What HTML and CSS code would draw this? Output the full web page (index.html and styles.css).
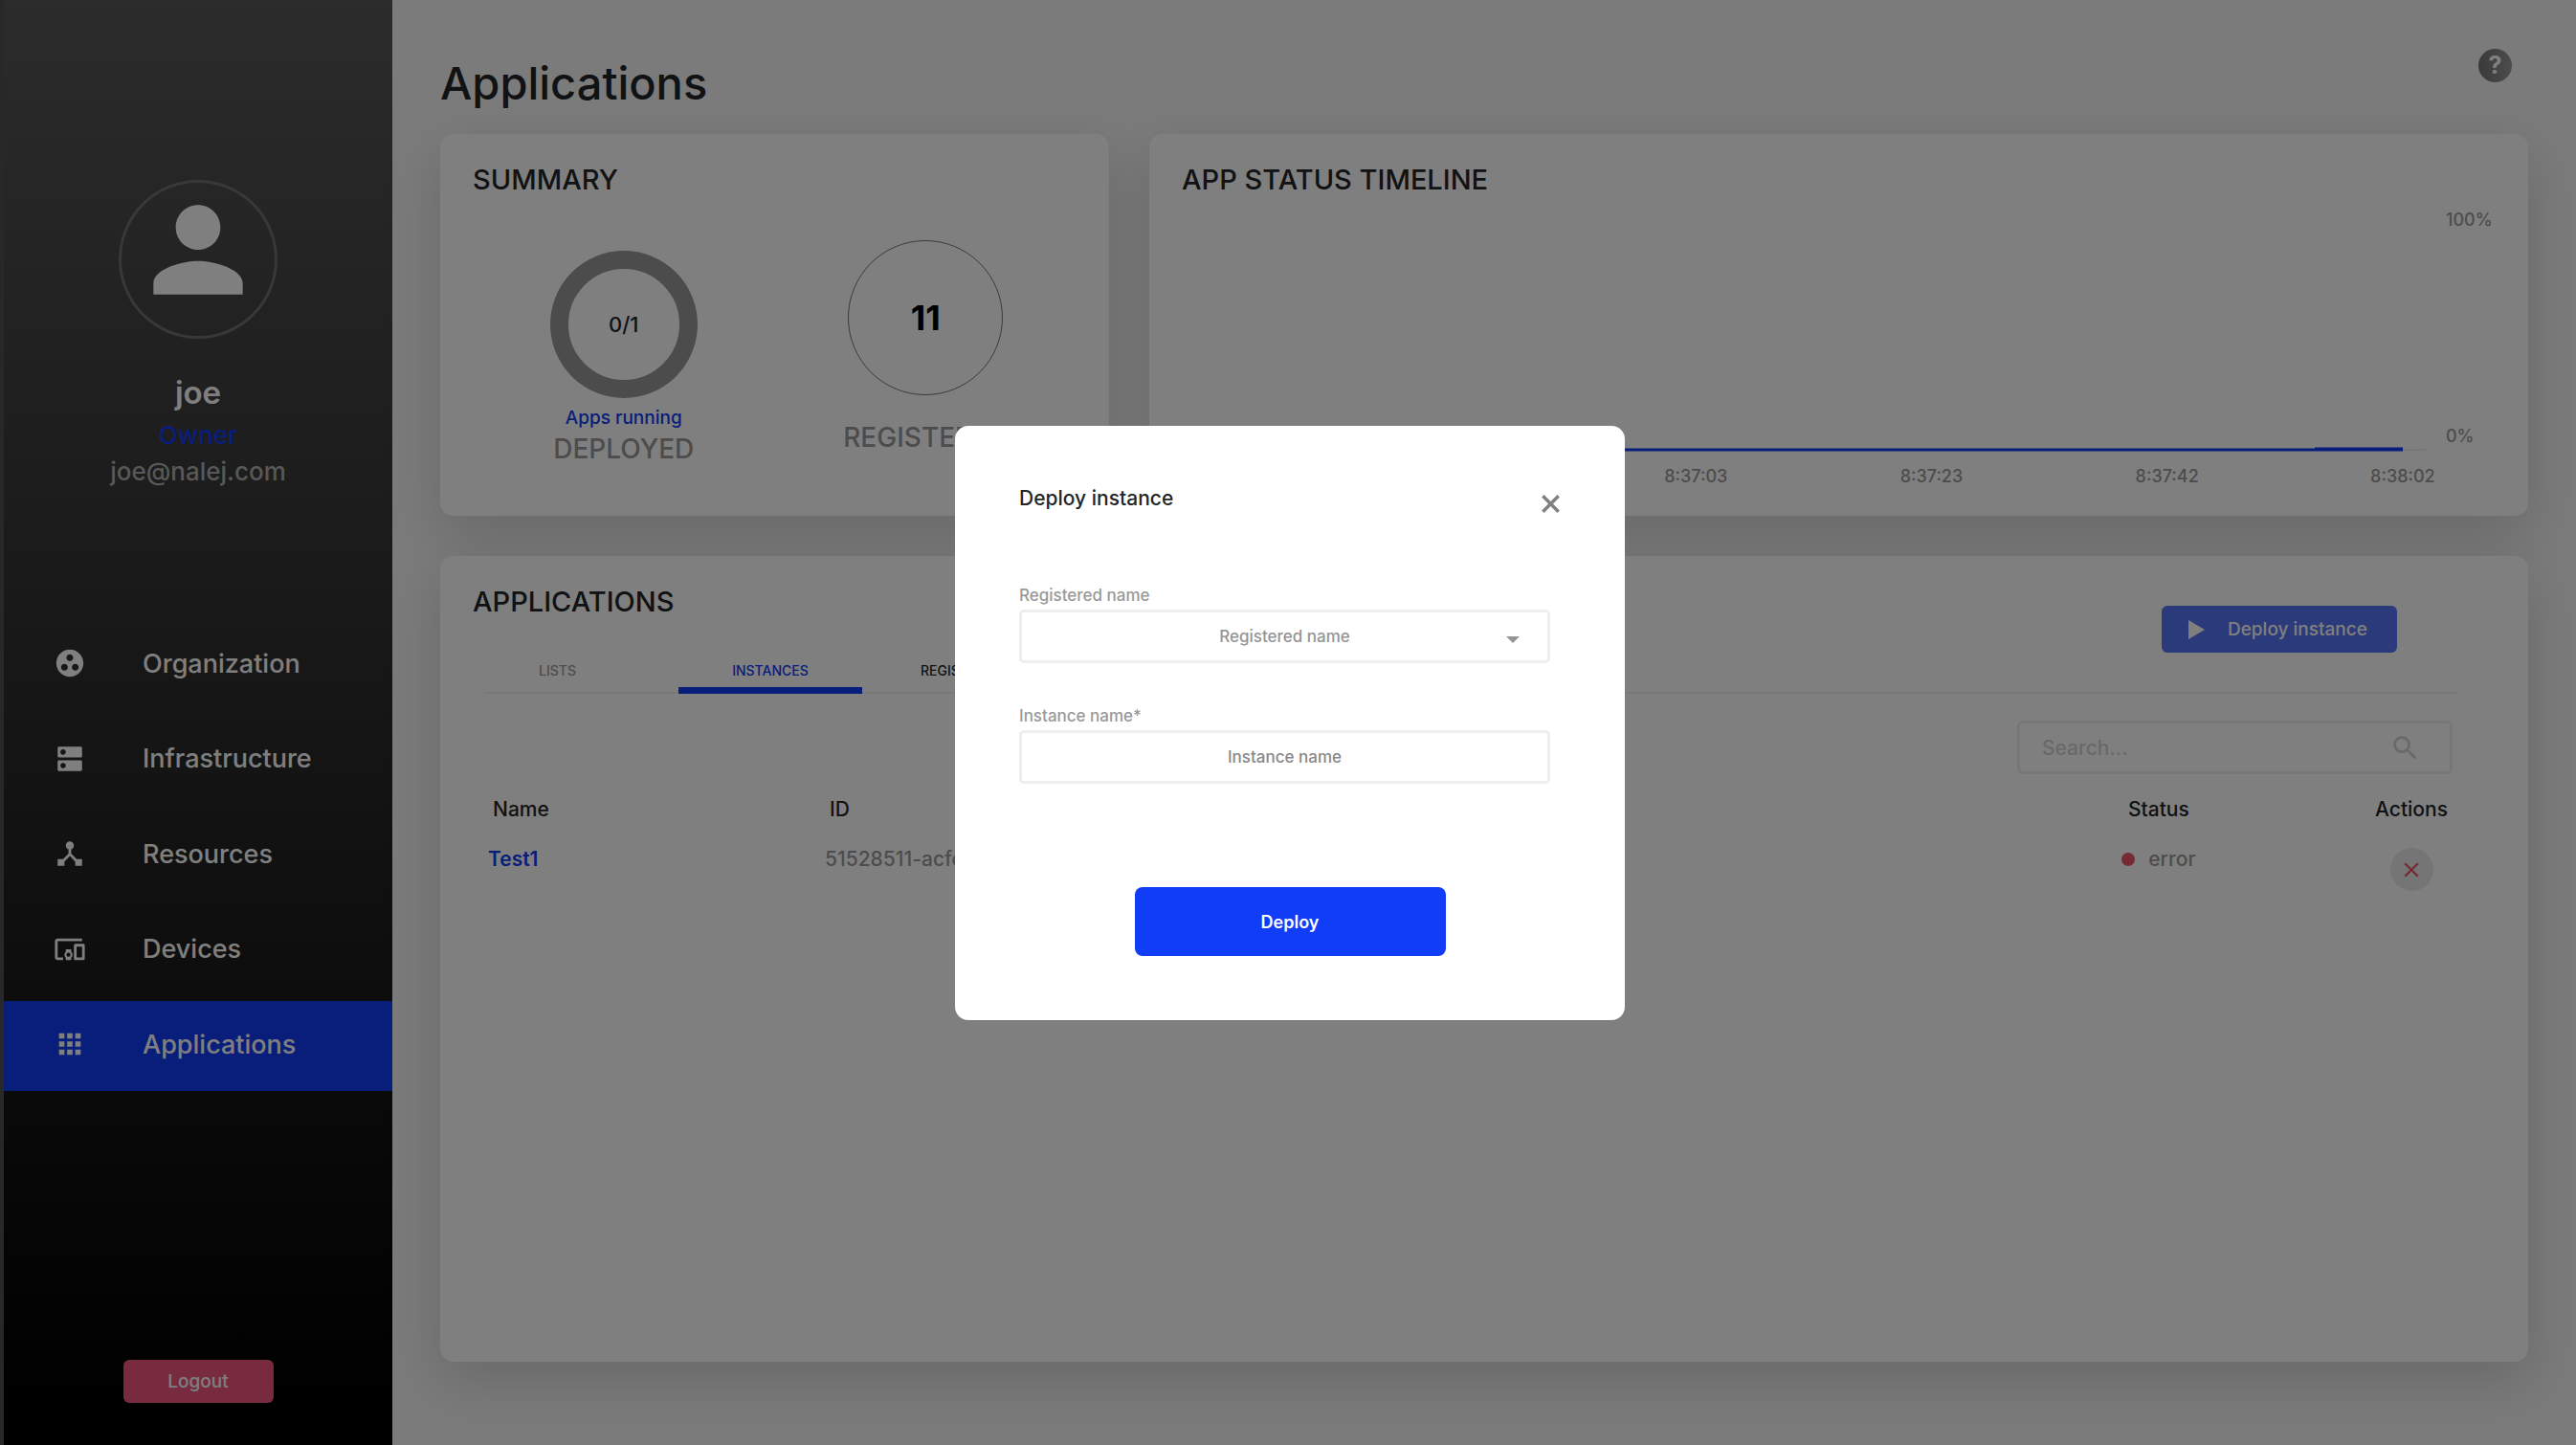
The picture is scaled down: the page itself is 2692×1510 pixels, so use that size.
FILE: index.html
```html
<!DOCTYPE html>
<html lang="en">
<head>
<meta charset="utf-8">
<meta name="viewport" content="width=device-width, initial-scale=1">
<title>Applications</title>
<link rel="stylesheet" href="styles.css">
</head>
<body>
<div class="app">
  <aside class="sidebar">
    <div class="avatar">
      <svg viewBox="0 0 24 24" aria-hidden="true"><path d="M12 12c2.21 0 4-1.79 4-4s-1.79-4-4-4-4 1.79-4 4 1.79 4 4 4zm0 2c-2.67 0-8 1.34-8 4v2h16v-2c0-2.66-5.33-4-8-4z"/></svg>
    </div>
    <p class="user-name">joe</p>
    <p class="user-role">Owner</p>
    <p class="user-email">joe@nalej.com</p>
    <nav class="nav">
      <a class="nav-link" href="#organization">
        <svg viewBox="0 0 24 24" aria-hidden="true"><path d="M12 2C6.48 2 2 6.48 2 12s4.48 10 10 10 10-4.48 10-10S17.52 2 12 2zM8 17.5c-1.38 0-2.500-1.120-2.500-2.500s1.120-2.500 2.500-2.500 2.500 1.120 2.500 2.500-1.120 2.500-2.500 2.500zM9.500 8c0-1.380 1.120-2.500 2.500-2.500s2.500 1.120 2.500 2.500-1.120 2.500-2.500 2.500S9.500 9.380 9.500 8zm6.500 9.500c-1.380 0-2.500-1.120-2.500-2.500s1.120-2.500 2.500-2.500 2.500 1.120 2.500 2.500-1.120 2.500-2.500 2.500z"/></svg>
        Organization
      </a>
      <a class="nav-link" href="#infrastructure">
        <svg viewBox="0 0 24 24" aria-hidden="true"><path d="M20 13H4c-.55 0-1 .45-1 1v6c0 .55.45 1 1 1h16c.55 0 1-.45 1-1v-6c0-.55-.45-1-1-1zM7 19c-1.100 0-2-.900-2-2s.900-2 2-2 2 .900 2 2-.900 2-2 2zM20 3H4c-.55 0-1 .45-1 1v6c0 .55.45 1 1 1h16c.55 0 1-.45 1-1V4c0-.55-.45-1-1-1zM7 9c-1.100 0-2-.900-2-2s.900-2 2-2 2 .900 2 2-.900 2-2 2z"/></svg>
        Infrastructure
      </a>
      <a class="nav-link" href="#resources">
        <svg viewBox="0 0 24 24" aria-hidden="true"><path d="M17 16l-4-4V8.820C14.160 8.400 15 7.300 15 6c0-1.660-1.340-3-3-3S9 4.340 9 6c0 1.300.840 2.400 2 2.820V12l-4 4H3v5h5v-3.050l4-4.200 4 4.200V21h5v-5h-4z"/></svg>
        Resources
      </a>
      <a class="nav-link" href="#devices">
        <svg viewBox="0 0 24 24" aria-hidden="true"><path d="M3 6h18V4H3c-1.100 0-2 .900-2 2v12c0 1.100.900 2 2 2h4v-2H3V6zm10 6H9v1.780c-.610.550-1 1.330-1 2.220s.390 1.670 1 2.220V20h4v-1.780c.610-.550 1-1.340 1-2.220s-.390-1.670-1-2.220V12zm-2 5.500c-.830 0-1.500-.670-1.500-1.500s.670-1.500 1.500-1.500 1.500.670 1.500 1.500-.670 1.500-1.500 1.500zM22 8h-6c-.500 0-1 .500-1 1v10c0 .500.500 1 1 1h6c.500 0 1-.500 1-1V9c0-.500-.500-1-1-1zm-1 10h-4v-8h4v8z"/></svg>
        Devices
      </a>
      <a class="nav-link active" href="#applications">
        <svg viewBox="0 0 24 24" aria-hidden="true"><path d="M4 8h4V4H4v4zm6 12h4v-4h-4v4zm-6 0h4v-4H4v4zm0-6h4v-4H4v4zm6 0h4v-4h-4v4zm6-10v4h4V4h-4zm-6 4h4V4h-4v4zm6 6h4v-4h-4v4zm0 6h4v-4h-4v4z"/></svg>
        Applications
      </a>
    </nav>
    <button class="logout" type="button">Logout</button>
  </aside>

  <main class="main">
    <header class="page-head">
      <h1>Applications</h1>
      <button class="help" type="button" aria-label="Help">?</button>
    </header>

    <div class="overview">
      <section class="card">
        <h2>SUMMARY</h2>
        <div class="stats">
          <div class="stat stat-deployed">
            <div class="donut">0/1</div>
            <p class="stat-note">Apps running</p>
            <p class="stat-label">DEPLOYED</p>
          </div>
          <div class="stat stat-registered">
            <div class="count">11</div>
            <p class="stat-label">REGISTERED</p>
          </div>
        </div>
      </section>

      <section class="card timeline">
        <h2>APP STATUS TIMELINE</h2>
        <div class="plot">
          <svg class="plot-area" viewBox="0 0 1300 254" preserveAspectRatio="none" aria-hidden="true">
            <path class="axis" d="M42 252H1300"/>
            <path class="series" d="M42 252H1276"/>
            <path class="series recent" d="M1184 251H1276"/>
          </svg>
          <div class="y-labels"><span>100%</span><span>0%</span></div>
        </div>
        <div class="x-labels">
          <span>8:37:03</span><span>8:37:23</span><span>8:37:42</span><span>8:38:02</span>
        </div>
      </section>
    </div>

    <section class="card applications">
      <div class="list-head">
        <div>
          <h2>APPLICATIONS</h2>
          <div class="tabs" role="tablist">
            <button class="tab tab-lists" type="button" role="tab">LISTS</button>
            <button class="tab tab-instances" type="button" role="tab" aria-selected="true">INSTANCES</button>
            <button class="tab tab-registered" type="button" role="tab">REGISTERED</button>
          </div>
        </div>
        <button class="deploy-open" type="button">
          <svg viewBox="0 0 17 20" aria-hidden="true"><path d="M0 0l17 10L0 20z"/></svg>
          Deploy instance
        </button>
      </div>
      <div class="search">
        <input type="text" placeholder="Search..." aria-label="Search">
        <svg viewBox="0 0 24 24" aria-hidden="true"><path d="M15.500 14h-.790l-.280-.270C15.410 12.590 16 11.110 16 9.500 16 5.910 13.090 3 9.500 3S3 5.910 3 9.500 5.910 16 9.500 16c1.610 0 3.090-.590 4.230-1.570l.270.280v.790l5 4.990L20.490 19l-4.990-5zm-6 0C7.010 14 5 11.990 5 9.500S7.010 5 9.500 5 14 7.010 14 9.500 11.990 14 9.500 14z"/></svg>
      </div>
      <table class="instances">
        <thead>
          <tr><th class="col-name">Name</th><th>ID</th><th class="col-status">Status</th><th class="col-actions">Actions</th></tr>
        </thead>
        <tbody>
          <tr>
            <td><a href="#test1">Test1</a></td>
            <td>51528511-acfc</td>
            <td class="status"><span class="dot"></span>error</td>
            <td class="actions">
              <button class="remove" type="button" aria-label="Undeploy">
                <svg viewBox="0 0 16 16" aria-hidden="true"><path d="M2 2l12 12M14 2L2 14"/></svg>
              </button>
            </td>
          </tr>
        </tbody>
      </table>
    </section>
  </main>
</div>

<div class="backdrop">
  <div class="modal" role="dialog" aria-modal="true" aria-labelledby="modal-title">
    <div class="modal-head">
      <h2 id="modal-title">Deploy instance</h2>
      <button class="close" type="button" aria-label="Close">
        <svg viewBox="0 0 18 18" aria-hidden="true"><path d="M2 2l14 14M16 2L2 16"/></svg>
      </button>
    </div>
    <form>
      <div class="field">
        <label for="registered">Registered name</label>
        <div class="select">
          <select id="registered"><option>Registered name</option></select>
          <svg viewBox="0 0 14 7" aria-hidden="true"><path d="M0 0h14L7 7z"/></svg>
        </div>
      </div>
      <div class="field">
        <label for="instance">Instance name*</label>
        <input id="instance" type="text" placeholder="Instance name">
      </div>
      <button class="deploy" type="submit">Deploy</button>
    </form>
  </div>
</div>
</body>
</html>
```
FILE: styles.css
```css
:root {
  --blue: #103df5;
  --grey: #999;
  --ink: #232527;
  --line: #eee;
}

* { box-sizing: border-box; }

body {
  margin: 0;
  font-family: Inter, "Open Sans", sans-serif;
  font-weight: 500;
  color: var(--ink);
  background: #f6f6f6;
}

h1, h2, p { margin: 0; font-weight: 500; }
button, input, select { font: inherit; margin: 0; }
button { border: 0; padding: 0; cursor: pointer; }
a { text-decoration: none; }

.app { display: flex; min-height: 100vh; }

/* Sidebar */
.sidebar {
  flex: 0 0 410px;
  display: flex;
  flex-direction: column;
  padding: 188px 0 44px;
  border-left: 4px solid #505050;
  background: linear-gradient(#585858, #000 98%);
  color: #fff;
  text-align: center;
}
.avatar {
  width: 166px;
  height: 166px;
  margin: 0 auto;
  border: 3px solid #707070;
  border-radius: 50%;
}
.avatar svg { width: 140px; height: 140px; fill: #fff; }
.user-name { margin-top: 36px; font-size: 33px; line-height: 40px; font-weight: 600; }
.user-role { margin-top: 5px; font-size: 26px; line-height: 40px; color: var(--blue); }
.user-email { font-size: 26px; line-height: 36px; color: #b0b0b0; }

.nav {
  display: flex;
  flex-direction: column;
  justify-content: space-between;
  height: 492px;
  margin-top: 137px;
}
.nav-link {
  display: flex;
  align-items: center;
  gap: 59px;
  height: 94px;
  padding: 0 0 4px 52px;
  font-size: 27px;
  color: #fff;
}
.nav-link svg { width: 34px; height: 34px; fill: currentColor; }
.nav-link.active { background: var(--blue); }

.logout {
  width: 157px;
  height: 45px;
  margin: auto auto 0;
  border-radius: 6px;
  background: #f0547e;
  color: #fff;
  font-size: 19px;
}

/* Page */
.main {
  flex: 1;
  min-width: 0;
  display: flex;
  flex-direction: column;
  padding: 51px 50px 87px;
}
.page-head {
  display: flex;
  justify-content: space-between;
  align-items: flex-start;
  padding: 0 17px 23px 0;
}
.page-head h1 { padding-top: 6px; font-size: 47px; line-height: 60px; }
.help {
  width: 35px;
  height: 35px;
  border-radius: 50%;
  background: linear-gradient(to right, #747474, #999);
  color: #fff;
  font-size: 25px;
  line-height: 35px;
  font-weight: 700;
}

.card {
  padding: 34px;
  border-radius: 14px;
  background: #fff;
  box-shadow: 0 20px 60px rgba(0, 0, 0, .15);
}
.card h2 { font-size: 29px; line-height: 28px; }

.overview {
  display: grid;
  grid-template-columns: 17fr 35fr;
  gap: 42px;
  margin-bottom: 42px;
}

/* Summary */
.stats {
  display: grid;
  grid-template-columns: 1fr 1fr;
  margin-top: 49px;
  padding-bottom: 20px;
}
.stat { display: flex; flex-direction: column; align-items: center; }
.stat-deployed { padding-top: 11px; }
.donut, .count { display: grid; place-items: center; border-radius: 50%; }
.donut {
  width: 154px;
  height: 154px;
  border: 19px solid var(--grey);
  font-size: 22px;
}
.count {
  width: 162px;
  height: 162px;
  border: 1px solid #777;
  font-size: 36px;
  font-weight: 700;
  color: #000;
}
.stat-note { margin: 9px 0 4px; font-size: 19px; line-height: 24px; color: var(--blue); }
.stat-label { font-size: 28px; line-height: 32px; color: var(--grey); }
.stat-registered .stat-label { margin-top: 28px; }

/* Timeline */
.timeline { padding-bottom: 29px; padding-right: 8px; }
.plot { display: flex; gap: 21px; margin-top: 16px; }
.plot-area { flex: 1; min-width: 0; height: 254px; fill: none; }
.axis { stroke: var(--line); stroke-width: 2; }
.series { stroke: var(--blue); stroke-width: 3; }
.y-labels {
  display: flex;
  flex-direction: column;
  justify-content: space-between;
  width: 78px;
  padding-bottom: 5px;
  font-size: 18px;
  line-height: 23px;
  color: var(--grey);
}
.x-labels {
  display: flex;
  justify-content: flex-end;
  margin-top: 14px;
  font-size: 18px;
  line-height: 24px;
  color: var(--grey);
}
.x-labels span { flex: 0 0 17.600%; text-align: center; }

/* Instance list */
.applications { flex: 1; padding-left: 46px; padding-right: 74px; }
.list-head {
  display: flex;
  justify-content: space-between;
  align-items: flex-start;
  box-shadow: inset 0 -2px #f3f3f3;
}
.list-head h2 { margin-left: -12px; }
.tabs { display: flex; gap: 50px; margin-top: 46px; }
.tab {
  padding-bottom: 5px;
  border-bottom: 7px solid transparent;
  background: none;
  font-size: 14px;
  line-height: 24px;
  color: var(--ink);
}
.tab-lists { width: 153px; color: var(--grey); }
.tab-instances { width: 192px; color: var(--blue); border-color: var(--blue); }
.tab-registered { width: 108px; }
.deploy-open {
  display: flex;
  align-items: center;
  gap: 24px;
  width: 246px;
  height: 49px;
  margin: 18px 63px 0 0;
  padding-left: 28px;
  border-radius: 6px;
  background: #5674f4;
  color: #fff;
  font-size: 19px;
}
.deploy-open svg { width: 17px; height: 20px; fill: currentColor; }

.search {
  display: flex;
  align-items: center;
  width: 455px;
  height: 56px;
  margin: 28px 5px 0 auto;
  padding: 0 30px 0 23px;
  border: 3px solid var(--line);
  border-radius: 6px;
}
.search input {
  flex: 1;
  min-width: 0;
  padding: 0;
  border: 0;
  outline: 0;
  background: none;
  font-size: 21px;
}
.search input::placeholder { color: #d2d2d2; opacity: 1; }
.search svg { width: 33px; height: 33px; fill: #d2d2d2; }

.instances {
  width: 100%;
  margin-top: 12px;
  padding-left: 4px;
  border-spacing: 0;
  table-layout: fixed;
  font-size: 21px;
  line-height: 24px;
}
.instances th { height: 50px; padding: 0 0 0 5px; font-weight: 500; text-align: left; }
.instances td { padding: 15px 0 0; vertical-align: top; color: var(--grey); }
.instances a { color: var(--blue); font-weight: 600; }
.instances .col-name { width: 352px; }
.instances .col-status { width: 21%; padding: 0; text-align: center; }
.instances .col-actions { width: 96px; padding: 0; text-align: center; }
.instances .status, .instances .actions { text-align: center; }
.dot {
  display: inline-block;
  width: 14px;
  height: 14px;
  margin-right: 14px;
  border-radius: 50%;
  background: #ea5468;
}
.remove {
  display: inline-grid;
  place-items: center;
  width: 45px;
  height: 45px;
  border-radius: 50%;
  background: #ebebeb;
}
.remove svg { width: 18px; height: 18px; fill: none; stroke: #ea5468; stroke-width: 2; }

/* Dialog */
.backdrop {
  position: fixed;
  inset: 0;
  display: grid;
  place-items: center;
  padding-left: 4px;
  background: rgba(0, 0, 0, .5);
}
.modal {
  width: 700px;
  padding: 62px 67px 67px;
  border-radius: 14px;
  background: #fff;
}
.modal-head {
  display: flex;
  justify-content: space-between;
  margin: 0 -4px 68px 0;
}
.modal-head h2 { font-size: 21px; line-height: 28px; }
.close {
  display: grid;
  place-items: center;
  width: 30px;
  height: 30px;
  margin-top: 5px;
  background: none;
}
.close svg { width: 21px; height: 21px; fill: none; stroke: #808080; stroke-width: 3; }
.field { margin: 0 11px 43px 0; font-size: 17px; }
.field label { display: block; margin-bottom: 3px; line-height: 24px; color: var(--grey); }
.field input, .field select {
  display: block;
  width: 100%;
  height: 56px;
  padding: 0;
  border: 3px solid var(--line);
  border-radius: 5px;
  outline: 0;
  background: none;
  color: #959595;
  text-align: center;
  text-align-last: center;
  appearance: none;
}
.field input::placeholder { color: #888; opacity: 1; }
.select { position: relative; }
.select svg {
  position: absolute;
  top: 28px;
  right: 32px;
  width: 14px;
  height: 7px;
  fill: #959595;
}
.deploy {
  display: block;
  width: 325px;
  height: 72px;
  margin: 108px auto 0;
  padding-top: 2px;
  border-radius: 8px;
  background: var(--blue);
  color: #fff;
  font-size: 18px;
  font-weight: 600;
}
```
